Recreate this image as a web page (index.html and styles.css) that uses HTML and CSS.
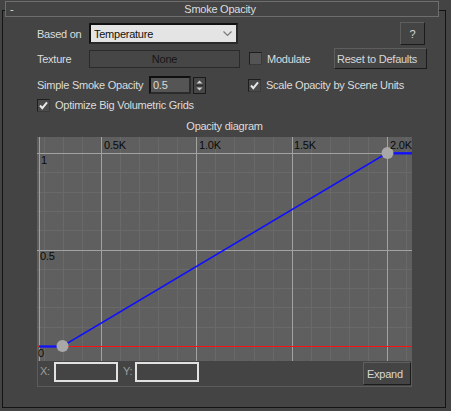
FILE: index.html
```html
<!DOCTYPE html>
<html>
<head>
<meta charset="utf-8">
<link rel="stylesheet" href="styles.css">
</head>
<body>
<div class="frame">
  <div class="head"><span class="minus">-</span><span class="title">Smoke Opacity</span></div>
  <div class="content">
    <div class="row r1">
      <span class="lbl w52">Based on</span>
      <div class="select"><span>Temperature</span>
        <svg class="chev" width="9" height="6" viewBox="0 0 9 6"><path d="M0.5 0.5 L4.5 4.5 L8.5 0.5" fill="none" stroke="#7a7a7a" stroke-width="1.2"/></svg>
      </div>
      <button class="btn help">?</button>
    </div>
    <div class="row r2">
      <span class="lbl w52">Texture</span>
      <button class="none">None</button>
      <span class="cb cb-mod"></span>
      <span class="lbl cblbl">Modulate</span>
      <button class="btn reset">Reset to Defaults</button>
    </div>
    <div class="row r3">
      <span class="lbl w112">Simple Smoke Opacity</span>
      <div class="num">0.5</div>
      <div class="spin">
        <svg width="11" height="15" viewBox="0 0 11 15"><path d="M5.5 2.5 L8.5 5.5 L2.5 5.5 Z" fill="#d0d0d0"/><path d="M2 7.5 H9" stroke="#2a2a2a" stroke-width="1"/><path d="M2.5 9.5 L8.5 9.5 L5.5 12.5 Z" fill="#d0d0d0"/></svg>
      </div>
      <span class="cb checked cb-scale"><svg width="11" height="11" viewBox="0 0 11 11"><path d="M2 5.5 L4.3 8.2 L9 2.3" fill="none" stroke="#e8e8e8" stroke-width="2"/></svg></span>
      <span class="lbl cblbl">Scale Opacity by Scene Units</span>
    </div>
    <div class="row r4">
      <span class="cb checked"><svg width="11" height="11" viewBox="0 0 11 11"><path d="M2 5.5 L4.3 8.2 L9 2.3" fill="none" stroke="#e8e8e8" stroke-width="2"/></svg></span>
      <span class="lbl cblbl">Optimize Big Volumetric Grids</span>
    </div>
    <div class="diag-title">Opacity diagram</div>
    <div class="graph">
      <svg class="plot" width="375" height="224" viewBox="0 0 375 224">
        <rect x="0" y="0" width="375" height="224" fill="#5f5f5f"/>
        <g stroke="#696969" stroke-width="1">
          <path d="M7.5 0V224M26.5 0V224M45.5 0V224M83.5 0V224M102.5 0V224M121.5 0V224M140.5 0V224M178.5 0V224M197.5 0V224M217.5 0V224M236.5 0V224M274.5 0V224M293.5 0V224M312.5 0V224M331.5 0V224M369.5 0V224"/>
          <path d="M0 35.5H375M0 55.5H375M0 74.5H375M0 93.5H375M0 132.5H375M0 151.5H375M0 170.5H375M0 190.5H375"/>
        </g>
        <g stroke="#a2a2a2" stroke-width="1">
          <path d="M64.5 0V224M159.5 0V224M255.5 0V224M350.5 0V224"/>
          <path d="M0 16.5H375M0 113.5H375"/>
        </g>
        <path d="M0 209.5H375" stroke="#ff1010" stroke-width="1"/>
        <path d="M2.5 0V224" stroke="#2ef02e" stroke-width="1"/>
        <path d="M2 209.5H25 L350 16 H375" fill="none" stroke="#1010ff" stroke-width="1.5"/>
        <path d="M356 16.5H375" fill="none" stroke="#1010ff" stroke-width="2"/>
        <path d="M2 209.5H25" fill="none" stroke="#1010ff" stroke-width="2"/>
        <circle cx="25.5" cy="209" r="6" fill="#a8a8a8"/>
        <circle cx="350.5" cy="16" r="6" fill="#a8a8a8"/>
        <g class="axis">
          <text x="67" y="12">0.5K</text>
          <text x="162" y="12">1.0K</text>
          <text x="257" y="12">1.5K</text>
          <text x="353" y="12">2.0K</text>
          <text x="4" y="27">1</text>
          <text x="3" y="123">0.5</text>
          <text x="1" y="220">0</text>
        </g>
      </svg>
      <div class="bar">
        <span class="xy">X:</span>
        <div class="field fx"></div>
        <span class="xy yl">Y:</span>
        <div class="field"></div>
        <button class="btn expand">Expand</button>
      </div>
    </div>
  </div>
</div>
</body>
</html>
```
FILE: styles.css
```css
* { box-sizing: border-box; }
html, body { margin: 0; padding: 0; background: #444444; }
body {
  width: 451px; height: 411px; overflow: hidden;
  font-family: "Liberation Sans", Arial, sans-serif;
  font-size: 11px; letter-spacing: -0.25px; color: #dcdcdc;
  padding-top: 10px; padding-left: 2px;
}
.frame {
  width: 444px; height: 398px;
  border: 1px solid #141414;
}
.head {
  margin: -10px 0 0 2px;
  width: 434px; height: 16px;
  border: 1px solid #6e6e6e;
  background: #444444;
  display: flex; align-items: center;
  position: relative;
  line-height: 14px;
}
.minus { padding-left: 4px; width: 0; white-space: nowrap; }
.title { flex: 1; text-align: center; margin-right: 8px; }
.content { padding-left: 34px; }
.row { display: flex; align-items: center; }
.lbl { white-space: nowrap; line-height: 14px; }
.w52 { width: 52px; }
.w112 { width: 112px; }
.r1 { margin-top: 5px; height: 23px; }
.r2 { margin-top: 3px; height: 21px; }
.r3 { margin-top: 7px; height: 18px; }
.r4 { margin-top: 4px; height: 14px; }
.select {
  width: 149px; height: 21px;
  background: #e4e4e4; color: #111;
  border: 2px solid #111;
  border-right-color: #2a2a2a; border-bottom-color: #2a2a2a;
  display: flex; align-items: center; justify-content: space-between;
  padding: 0 4px 0 3px;
}
.chev { display: block; }
button { font: inherit; letter-spacing: inherit; margin: 0; padding: 0; cursor: default; }
.btn {
  background: #444444; color: #d8d8d8;
  border: 1px solid #1b1b1b;
  border-top-color: #5e5e5e; border-left-color: #5e5e5e;
  line-height: 14px;
}
.help { margin-left: auto; margin-right: 20px; width: 25px; height: 23px; }
.none {
  width: 151px; height: 18px;
  background: #464646; color: #161616;
  border: 1px solid #2a2a2a;
  line-height: 14px;
}
.cb {
  width: 13px; height: 13px;
  background: #545454;
  border: 1px solid #1e1e1e;
  border-right-color: #3a3a3a; border-bottom-color: #3a3a3a;
  display: flex; align-items: center; justify-content: center;
}
.cb.checked { background: #4a4a4a; }
.cb svg { display: block; }
.cb-mod { margin-left: 9px; }
.cb-scale { margin-left: 42px; }
.cblbl { margin-left: 5px; }
.reset { margin-left: auto; margin-right: 18px; width: 93px; height: 21px; text-align: left; padding-left: 2px; white-space: nowrap; }
.num {
  width: 42px; height: 18px;
  background: #555555; color: #dadada;
  border: 2px solid #101010;
  border-right-color: #2b2b2b; border-bottom-color: #2b2b2b;
  padding-left: 2px; line-height: 14px;
}
.spin {
  margin-left: 2px; width: 13px; height: 17px;
  border: 1px solid #1a1a1a;
  background: #464646;
  display: flex; align-items: center; justify-content: center;
}
.spin svg { display: block; }
.diag-title { margin-top: 8px; height: 13px; line-height: 13px; text-align: center; width: 375px; }
.graph { margin-top: 4px; width: 375px; }
.plot { display: block; }
.axis text { font-family: "Liberation Sans", Arial, sans-serif; font-size: 11px; letter-spacing: -0.2px; fill: #0a0a0a; }
.bar {
  height: 26px;
  border: 1px solid #5c5c5c; border-top: 0;
  background: #444444;
  display: flex; align-items: flex-start;
  padding-top: 1px; padding-left: 2px;
}
.xy { color: #9c9c9c; line-height: 19px; width: 14px; }
.yl { margin-left: 5px; width: 12px; }
.field {
  width: 64px; height: 20px;
  border: 2px solid #e2e2e2;
  background: #444444;
}
.expand { margin-left: auto; width: 48px; height: 23px; margin-right: 0; text-align: left; padding-left: 3px; }
```
